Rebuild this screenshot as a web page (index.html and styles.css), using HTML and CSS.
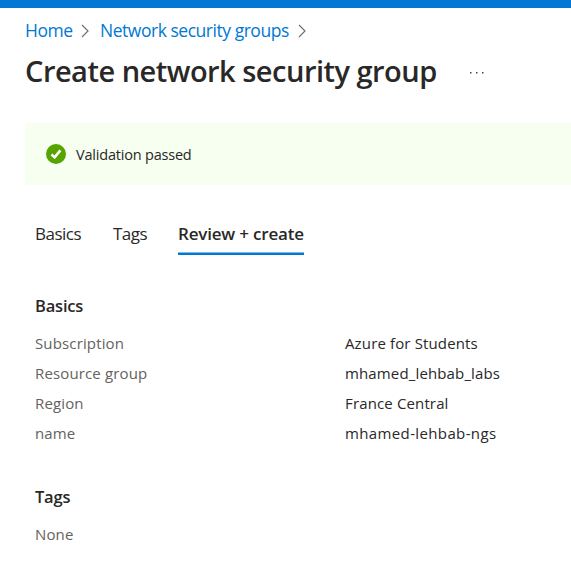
FILE: index.html
```html
<!DOCTYPE html>
<html lang="en">
<head>
<meta charset="utf-8">
<title>Create network security group</title>
<link rel="stylesheet" href="styles.css">
</head>
<body>
<div class="topbar"></div>
<nav class="breadcrumb">
  <a class="home">Home</a>
  <svg class="chevron" viewBox="0 0 8 14"><path d="M1 1 7 7 1 13"/></svg>
  <a class="groups">Network security groups</a>
  <svg class="chevron" viewBox="0 0 8 14"><path d="M1 1 7 7 1 13"/></svg>
</nav>
<header class="heading">
  <h1>Create network security group</h1>
  <svg class="more" viewBox="0 0 14 2"><path d="M0 0h1.500v1.500H0zM6 0h1.500v1.500H6zM12 0h1.500v1.500H12z"/></svg>
</header>
<div class="banner">
  <svg class="check" viewBox="0 0 20 20"><circle cx="10" cy="10" r="10"/><path d="M5.500 10.300 8.600 13.400 14.400 6.400"/></svg>
  <span class="status">Validation passed</span>
</div>
<div class="tabs">
  <a class="tab tab-basics">Basics</a>
  <a class="tab tab-tags">Tags</a>
  <a class="tab active">Review + create</a>
</div>
<main>
  <h2>Basics</h2>
  <dl>
    <dt>Subscription</dt><dd>Azure for Students</dd>
    <dt>Resource group</dt><dd>mhamed_lehbab_labs</dd>
    <dt>Region</dt><dd>France Central</dd>
    <dt>name</dt><dd class="name">mhamed-lehbab-ngs</dd>
  </dl>
  <h2 class="h-tags">Tags</h2>
  <p class="none">None</p>
</main>
</body>
</html>
```
FILE: styles.css
```css
* { box-sizing: border-box; }
body {
  margin: 0;
  height: 562px;
  overflow: hidden;
  background: #fff;
  color: #292827;
  font: 15px/30px "Open Sans", "Noto Sans", sans-serif;
  letter-spacing: 0.140px;
  white-space: nowrap;
}
h1, h2, dl, dd, p { margin: 0; }
.topbar { height: 8px; background: #0078d4; }
.breadcrumb {
  display: flex;
  align-items: center;
  height: 45px;
  padding: 0 0 2px 25px;
  font-size: 17.500px;
  letter-spacing: -0.470px;
  color: #0078d4;
}
.home { width: 47px; }
.groups { width: 189px; margin-left: 1px; }
.chevron { flex: none; width: 8px; height: 14px; margin: 3px 10px 0 9px; fill: none; stroke: #707070; stroke-width: 1.200; }
.heading { display: flex; align-items: center; height: 36px; padding-left: 25px; }
h1 { width: 412px; font-size: 29px; line-height: 36px; font-weight: 600; letter-spacing: -0.500px; }
.more { width: 14px; height: 2px; margin: 4px 0 0 33px; fill: #444; }
.banner {
  display: flex;
  align-items: center;
  height: 62px;
  margin: 34px 0 0 25px;
  padding-left: 21px;
  background: #f6fff0;
  border-radius: 2px 0 0 2px;
}
.check { width: 20px; height: 20px; fill: #57a300; }
.check path { fill: none; stroke: #fff; stroke-width: 2.600; }
.status { margin: 2px 0 0 10px; font-size: 14.500px; letter-spacing: -0.200px; }
.tabs { display: flex; height: 36px; margin: 34px 0 0 35px; font-size: 17px; letter-spacing: -0.500px; }
.tab { height: 36px; }
.tab-basics { width: 78px; }
.tab-tags { width: 65px; }
.active {
  width: 126px;
  font-weight: 600;
  letter-spacing: -0.180px;
  background: linear-gradient(#7fbbe9 1px, #0078d4 1px) bottom / 100% 3px no-repeat;
}
main { padding: 36px 0 0 35px; }
h2 { font-size: 16.500px; line-height: 30px; font-weight: 600; letter-spacing: -0.200px; }
dl { display: grid; grid-template-columns: 310px auto; grid-auto-rows: 30px; margin-top: 7px; }
dt, .none { color: #646260; }
.name { letter-spacing: 0.370px; }
.h-tags { margin-top: 34px; }
.none { margin-top: 7px; }
```
